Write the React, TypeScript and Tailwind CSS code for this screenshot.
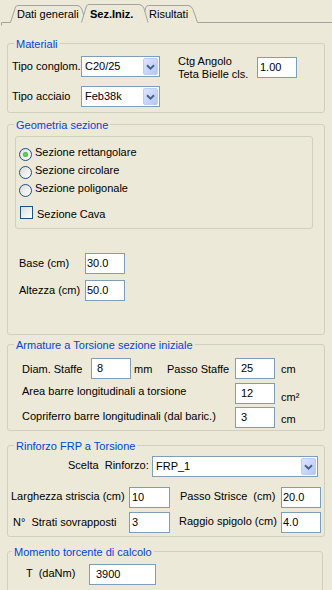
import React from "react";

type P = { value: string; className?: string };

function Field({ value, className = "" }: P) {
  return (
    <div className={`h-[21px] shrink-0 border border-[#7F9DB9] bg-white flex items-center ${className}`}>
      <span className="leading-[13px]">{value}</span>
    </div>
  );
}

function Select({ value, className = "" }: P) {
  return (
    <div className={`h-[21px] shrink-0 border border-[#7F9DB9] bg-white flex ${className}`}>
      <div className="flex-1 flex items-center pl-[3px] leading-[13px]">{value}</div>
      <div className="m-[1px] w-[15px] rounded-[2px] border border-[#BDCDF5] bg-linear-to-br from-[#DCE6FE] to-[#B3C7F6] flex items-center justify-center">
        <svg width="9" height="6" viewBox="0 0 9 6">
          <path d="M1 1.2 L4.5 4.6 L8 1.2" fill="none" stroke="#4D6185" strokeWidth="2" />
        </svg>
      </div>
    </div>
  );
}

function Radio({ checked, className = "" }: { checked?: boolean; className?: string }) {
  return (
    <div className={`w-[13px] h-[13px] shrink-0 rounded-full border border-[#1C5180] bg-linear-to-br from-[#DCDCD7] to-white flex items-center justify-center ${className}`}>
      {checked && <div className="w-[5px] h-[5px] rounded-full bg-radial from-[#6EE06E] to-[#21A121]" />}
    </div>
  );
}

function Checkbox() {
  return <div className="w-[13px] h-[13px] shrink-0 border border-[#1C5180] bg-linear-to-br from-[#DCDCD7] to-white" />;
}

function Group({
  title,
  className = "",
  legendClass = "ml-[6px]",
  children,
}: {
  title: string;
  className?: string;
  legendClass?: string;
  children: React.ReactNode;
}) {
  return (
    <fieldset className={`min-w-0 border border-[#D0D0BF] rounded-[3px] ${className}`}>
      <legend className={`px-[2px] pt-[2px] leading-[13px] text-[#0046D5] ${legendClass}`}>{title}</legend>
      {children}
    </fieldset>
  );
}

function Tabs() {
  const bg = "#ECE9D8";
  const st = "#A3A3A0";
  return (
    <div className="relative h-[23px]">
      <svg className="absolute left-0 top-0 overflow-visible" width="332" height="27" viewBox="0 0 332 27">
        <path d="M1.5 25.5 V22.5 H10.5" fill="none" stroke={st} />
        <path d="M10.5 22.5 L15.5 7 Q16.3 5.5 18 5.5 H77 Q80.5 5.5 82 9.5 L86 22.5" fill={bg} stroke={st} />
        <path d="M141 22.5 L146 7 Q146.8 5.5 148.5 5.5 H188 Q191.5 5.5 193 9.5 L197.5 22.5 H332" fill={bg} stroke={st} />
        <path d="M81.5 22.5 L86.5 6 Q87.3 4.5 89 4.5 H139 Q142.5 4.5 144 8.5 L148 22.5" fill={bg} stroke={st} />
      </svg>
      <div className="relative flex pt-[8px] pl-[17px]">
        <span className="w-[73px]">Dati generali</span>
        <span className="w-[59px] font-bold">Sez.Iniz.</span>
        <span>Risultati</span>
      </div>
    </div>
  );
}

export default function App() {
  return (
    <div className="w-[332px] h-[590px] overflow-hidden bg-[#ECE9D8] text-black text-[11px] leading-[13px] whitespace-nowrap font-['Liberation_Sans',Arial,sans-serif]">
      <Tabs />

      <Group title="Materiali" className="ml-[7px] mt-[13px] w-[318px] pb-[5px]">
        <div className="flex">
          <div className="flex flex-col pl-[4px]">
            <div className="flex items-center h-[21px] mt-[5px]">
              <span className="w-[69px]">Tipo conglom.</span>
              <Select value="C20/25" className="w-[79px]" />
            </div>
            <div className="flex items-center h-[21px] mt-[9px]">
              <span className="w-[69px]">Tipo acciaio</span>
              <Select value="Feb38k" className="w-[79px]" />
            </div>
          </div>
          <div className="flex items-start ml-[18px] mt-[4px]">
            <div className="w-[79px]">
              <div>Ctg Angolo</div>
              <div>Teta Bielle cls.</div>
            </div>
            <Field value="1.00" className="w-[40px] mt-[2px] pl-[2px]" />
          </div>
        </div>
      </Group>

      <Group title="Geometria sezione" className="ml-[7px] mt-[4px] w-[318px] pb-[33px]">
        <div className="mt-[4px] ml-[7px] w-[298px] border border-[#D0D0BF] rounded-[3px] pt-[9px] pb-[7px] pl-[3px]">
          {["Sezione rettangolare", "Sezione circolare", "Sezione poligonale"].map((t, i) => (
            <div key={t} className="flex items-start h-[18px]">
              <Radio checked={i === 0} className="mt-[2px]" />
              <span className="ml-[3px]">{t}</span>
            </div>
          ))}
          <div className="flex items-start h-[15px] mt-[6px] ml-[1px]">
            <Checkbox />
            <span className="ml-[4px] mt-[2px]">Sezione Cava</span>
          </div>
        </div>
        <div className="flex items-center h-[21px] mt-[24px] ml-[11px]">
          <span className="w-[66px]">Base (cm)</span>
          <Field value="30.0" className="w-[40px] pl-[1px]" />
        </div>
        <div className="flex items-center h-[21px] mt-[6px] ml-[11px]">
          <span className="w-[66px]">Altezza (cm)</span>
          <Field value="50.0" className="w-[40px] pl-[1px]" />
        </div>
      </Group>

      <Group title="Armature a Torsione sezione iniziale" className="ml-[7px] mt-[2px] w-[318px] pb-[2px]">
        <div className="pl-[14px]">
          <div className="flex items-start h-[21px] mt-[6px]">
            <span className="w-[69px] mt-[5px]">Diam. Staffe</span>
            <Field value="8" className="w-[40px] pl-[5px]" />
            <span className="w-[33px] ml-[3px] mt-[5px]">mm</span>
            <span className="w-[68px] mt-[5px]">Passo Staffe</span>
            <Field value="25" className="w-[40px] pl-[5px]" />
            <span className="ml-[6px] mt-[5px]">cm</span>
          </div>
          <div className="flex items-start h-[21px] mt-[4px]">
            <span className="w-[213px] mt-[2px]">Area barre longitudinali a torsione</span>
            <Field value="12" className="w-[40px] pl-[5px]" />
            <span className="ml-[6px] mt-[8px]">cm²</span>
          </div>
          <div className="flex items-start h-[21px] mt-[3px]">
            <span className="w-[213px] mt-[3px]">Copriferro barre longitudinali (dal baric.)</span>
            <Field value="3" className="w-[40px] pl-[5px]" />
            <span className="ml-[6px] mt-[6px]">cm</span>
          </div>
        </div>
      </Group>

      <Group title="Rinforzo FRP a Torsione" className="ml-[7px] mt-[7px] w-[318px] pb-[3px]">
        <div className="flex items-start h-[21px] mt-[3px]">
          <span className="ml-[60px] w-[84px] mt-[3px] whitespace-pre">Scelta  Rinforzo:</span>
          <Select value="FRP_1" className="w-[166px]" />
        </div>
        <div className="flex items-start h-[21px] mt-[10px]">
          <span className="ml-[3px] w-[118px] mt-[3px]">Larghezza striscia (cm)</span>
          <Field value="10" className="w-[41px] pl-[2px]" />
          <span className="ml-[10px] w-[101px] mt-[3px] whitespace-pre">Passo Strisce  (cm)</span>
          <Field value="20.0" className="w-[40px] pl-[1px]" />
        </div>
        <div className="flex items-start h-[21px] mt-[4px]">
          <span className="ml-[5px] w-[116px] mt-[4px] whitespace-pre">N°  Strati sovrapposti</span>
          <Field value="3" className="w-[41px] pl-[2px]" />
          <span className="ml-[9px] w-[102px] mt-[3px]">Raggio spigolo (cm)</span>
          <Field value="4.0" className="w-[40px] pl-[1px]" />
        </div>
      </Group>

      <Group title="Momento torcente di calcolo" legendClass="ml-[4px]" className="ml-[7px] mt-[7px] w-[316px] pb-[20px]">
        <div className="flex items-start h-[21px] mt-[5px]">
          <span className="ml-[18px] w-[63px] mt-[3px] whitespace-pre">T  (daNm)</span>
          <Field value="3900" className="w-[67px] pl-[6px]" />
        </div>
      </Group>
    </div>
  );
}
